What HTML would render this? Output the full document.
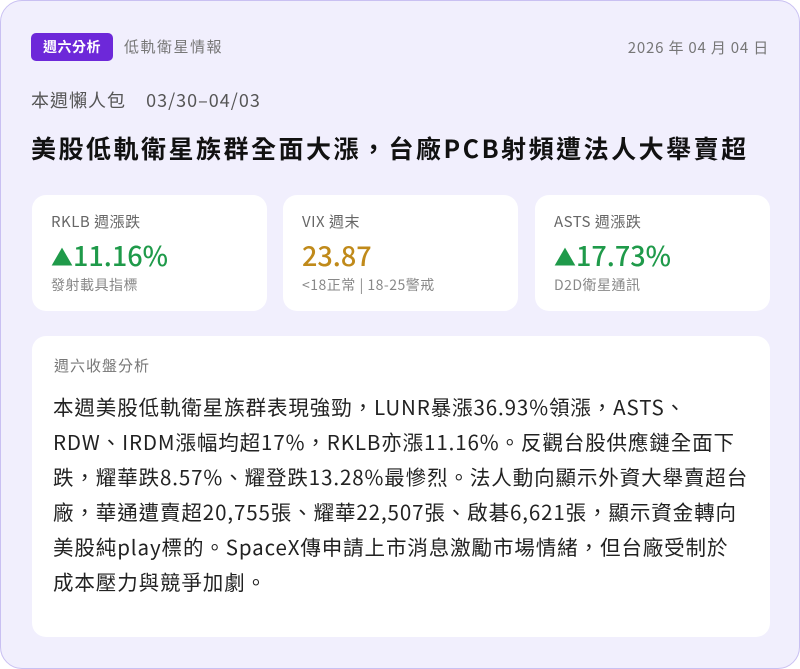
<!DOCTYPE html>
<html><head><meta charset="utf-8"><style>
*{margin:0;padding:0;box-sizing:border-box}
body{width:800px;height:669px;background:#fff;font-family:"Noto Sans CJK TC","Liberation Sans",sans-serif;overflow:hidden}
.card{position:absolute;left:0;top:0;width:800px;height:669px;background:#f1effd;border:1.5px solid #c9c0f2;border-radius:22px}
.badge{position:absolute;left:30px;top:32px;width:82px;height:28px;background:#6d28d9;color:#fff;border-radius:5px;font-size:14px;font-weight:bold;text-align:center;line-height:28px;letter-spacing:0.5px}
.cat{position:absolute;left:123px;top:35px;font-size:15px;line-height:22px;color:#777;letter-spacing:1.5px}
.date{position:absolute;right:30px;top:36px;font-size:15px;line-height:22px;color:#777;letter-spacing:0.8px}
.sub{position:absolute;left:30px;top:86px;font-size:18px;line-height:26px;color:#555;letter-spacing:1px}
.title{position:absolute;left:30px;top:129px;font-size:25px;line-height:36px;font-weight:bold;color:#111;white-space:nowrap;letter-spacing:2.5px}
.stat{position:absolute;top:194px;width:235px;height:116px;background:#fff;border-radius:14px}
.stat .l{position:absolute;left:19px;top:16px;font-size:15px;line-height:22px;color:#666;letter-spacing:0.5px}
.stat .v{position:absolute;left:19px;top:41px;font-size:27px;line-height:38px;font-weight:500}
.stat .v span{font-size:22px}
.stat .d{position:absolute;left:19px;top:80px;font-size:14px;line-height:20px;color:#888;letter-spacing:0.5px}
.an{position:absolute;left:31px;top:335px;width:738px;height:301px;background:#fff;border-radius:14px}
.an .h{position:absolute;left:22px;top:19px;font-size:15px;line-height:22px;color:#777;letter-spacing:1px}
.an .t{position:absolute;left:21px;top:53px;width:720px;font-size:20.5px;line-height:35px;color:#222;white-space:nowrap;letter-spacing:0.9px}
</style></head><body>
<div class="card">
<div class="badge">週六分析</div>
<div class="cat">低軌衛星情報</div>
<div class="date">2026 年 04 月 04 日</div>
<div class="sub">本週懶人包&nbsp;&nbsp;&nbsp;&nbsp;03/30–04/03</div>
<div class="title">美股低軌衛星族群全面大漲，台廠PCB射頻遭法人大舉賣超</div>
<div class="stat" style="left:31px"><div class="l">RKLB 週漲跌</div><div class="v" style="color:#1f9a4a"><span>▲</span>11.16%</div><div class="d">發射載具指標</div></div>
<div class="stat" style="left:282px"><div class="l">VIX 週末</div><div class="v" style="color:#c08a1a">23.87</div><div class="d">&lt;18正常 | 18-25警戒</div></div>
<div class="stat" style="left:534px"><div class="l">ASTS 週漲跌</div><div class="v" style="color:#1f9a4a"><span>▲</span>17.73%</div><div class="d">D2D衛星通訊</div></div>
<div class="an"><div class="h">週六收盤分析</div><div class="t">本週美股低軌衛星族群表現強勁，LUNR暴漲36.93%領漲，ASTS、<br>RDW、IRDM漲幅均超17%，RKLB亦漲11.16%。反觀台股供應鏈全面下<br>跌，耀華跌8.57%、耀登跌13.28%最慘烈。法人動向顯示外資大舉賣超台<br>廠，華通遭賣超20,755張、耀華22,507張、啟碁6,621張，顯示資金轉向<br>美股純play標的。SpaceX傳申請上市消息激勵市場情緒，但台廠受制於<br>成本壓力與競爭加劇。</div></div>
</div>
</body></html>
